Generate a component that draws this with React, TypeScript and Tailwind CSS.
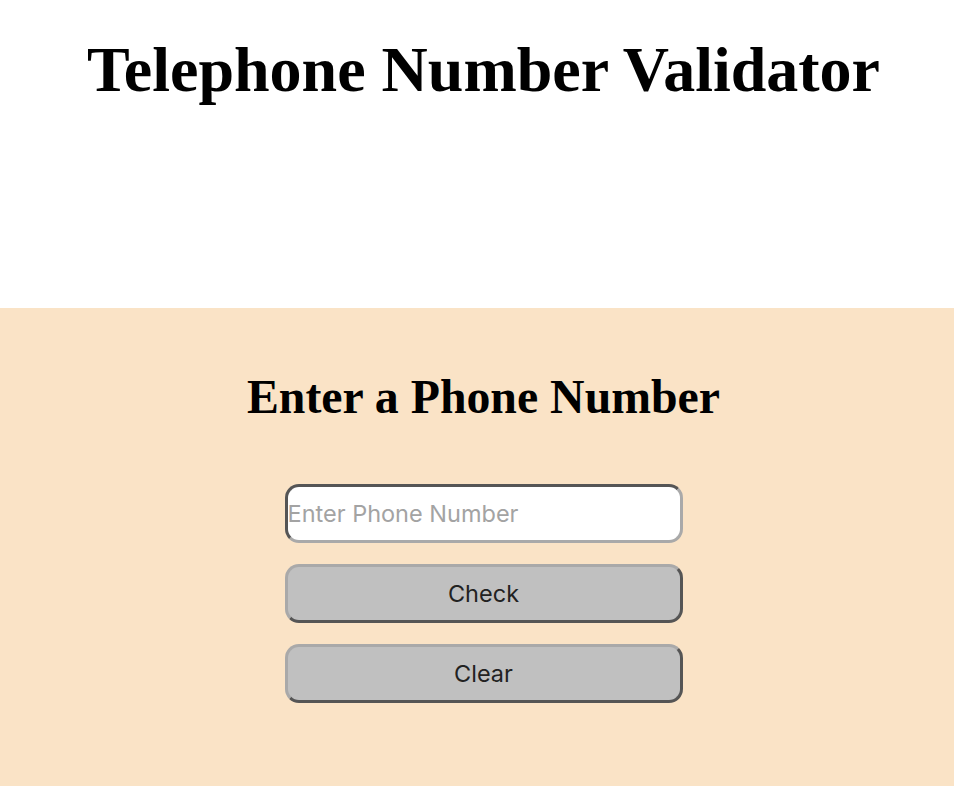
export default function App() {
  return (
    <div className="min-h-[786px] w-full flex flex-col bg-white" style={{ fontFamily: '"Liberation Serif", serif' }}>
      <header className="h-[308px] flex justify-center pl-[13px]">
        <h1 className="mt-[34px] text-[64px] leading-[72px] font-bold text-black">
          Telephone Number Validator
        </h1>
      </header>
      <main className="flex-1 bg-[#fae3c6] flex flex-col items-center pl-[13px] pt-[64px] pb-[80px]">
        <h2 className="text-[47.8px] leading-[50px] font-bold text-black">Enter a Phone Number</h2>
        <div className="mt-[62px] flex flex-col gap-[21px] w-[398px] font-['Inter',sans-serif]">
          <input
            placeholder="Enter Phone Number"
            className="h-[59px] w-full rounded-[14px] border-[3px] border-t-[#555] border-l-[#555] border-b-[#a9a9a9] border-r-[#a9a9a9] bg-white px-0 text-[23.5px] text-[#222] placeholder:text-[#a3a3a3] outline-none"
          />
          <button className="h-[59px] w-full rounded-[14px] border-[3px] border-t-[#a9a9a9] border-l-[#a9a9a9] border-b-[#555] border-r-[#555] bg-[#c0c0c0] text-[23.5px] text-[#222]">
            Check
          </button>
          <button className="h-[59px] w-full rounded-[14px] border-[3px] border-t-[#a9a9a9] border-l-[#a9a9a9] border-b-[#555] border-r-[#555] bg-[#c0c0c0] text-[23.5px] text-[#222]">
            Clear
          </button>
        </div>
      </main>
    </div>
  );
}
